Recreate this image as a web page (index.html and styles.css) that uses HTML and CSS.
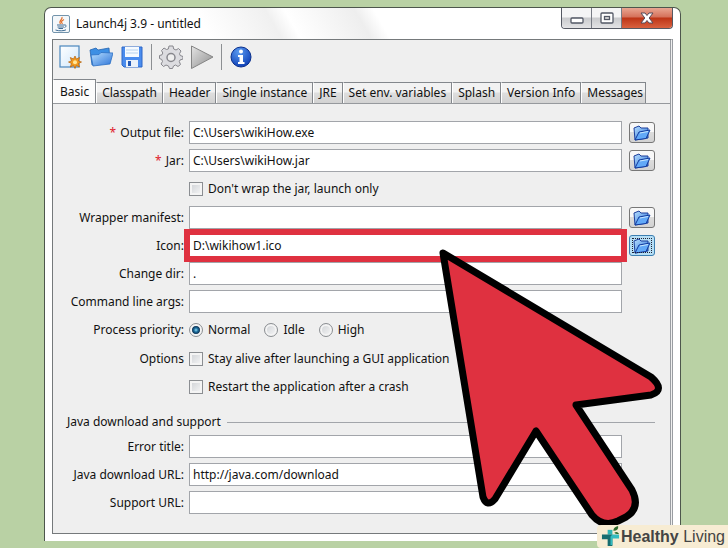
FILE: index.html
```html
<!DOCTYPE html>
<html lang="en">
<head>
    <meta charset="UTF-8">
    <meta name="viewport" content="width=device-width, initial-scale=1.0">
    <title>Launch4j 3.9 - untitled</title>
    <link rel="stylesheet" href="styles.css">
</head>
<body>
    <!-- Shared icons -->
    <svg class="defs" aria-hidden="true">
        <defs>
            <linearGradient id="blue" x1="0" y1="0" x2="1" y2="1">
                <stop offset="0" stop-color="#b9e0ff"/>
                <stop offset="1" stop-color="#2a72d8"/>
            </linearGradient>
            <linearGradient id="paper" x1="0" y1="0" x2="1" y2="1">
                <stop offset="0" stop-color="#ffffff"/>
                <stop offset="1" stop-color="#cfe6fb"/>
            </linearGradient>
            <linearGradient id="grey" x1="0" y1="0" x2="1" y2="1">
                <stop offset="0" stop-color="#e4e4e4"/>
                <stop offset="1" stop-color="#8f8f8f"/>
            </linearGradient>
            <radialGradient id="info" cx="0.4" cy="0.25" r="0.8">
                <stop offset="0" stop-color="#5b9bf0"/>
                <stop offset="1" stop-color="#0b3cb4"/>
            </radialGradient>
            <symbol id="open" viewBox="0 0 18 16">
                <path d="M1 3 L6 1 L8 3 L15 3 V13 L2 15 Z" fill="url(#blue)" stroke="#1c3f9c" stroke-linejoin="round"/>
                <path d="M6 7 L17 5 L13 13.500 L2 15 Z" fill="#62a9f8" stroke="#123a9e" stroke-linejoin="round"/>
                <path d="M7 8 L15 6.500" stroke="#c8e6ff"/>
            </symbol>
        </defs>
    </svg>

    <main class="window">
        <header class="title-bar">
            <svg class="app-icon" viewBox="0 0 18 18" aria-hidden="true">
                <rect x="0.500" y="0.500" width="17" height="17" rx="1.500" fill="#f3f7fa" stroke="#7394ac"/>
                <path d="M10 2 C11 5 6 5.500 8.500 9 M12 4.500 C9 6 9 7 10.500 9" fill="none" stroke="#e4702a" stroke-width="1.200"/>
                <path d="M5 10 H12 M5.500 12 H12 M6.500 13.500 H11 M12 10 C15 9.500 14.500 12 12.500 12.500 M3.500 15 C7 16.200 12 16 14 14.800" fill="none" stroke="#406d94"/>
            </svg>
            <h1>Launch4j 3.9 - untitled</h1>
            <div class="window-buttons">
                <button class="minimize" aria-label="Minimize">
                    <svg width="14" height="7" viewBox="0 0 14 7"><rect x="1" y="1" width="12" height="5" rx="1" fill="#fff" stroke="#535865" stroke-width="1.300"/></svg>
                </button>
                <button class="maximize" aria-label="Maximize">
                    <svg width="14" height="12" viewBox="0 0 14 12"><rect x="1" y="1" width="12" height="10" rx="1" fill="#fff" stroke="#535865" stroke-width="1.300"/><rect x="4.500" y="4.500" width="5" height="3" fill="#ddd" stroke="#535865" stroke-width="1.300"/></svg>
                </button>
                <button class="close" aria-label="Close">
                    <svg width="14" height="12" viewBox="0 0 14 12"><path d="M1 1 H5 L7 3.500 L9 1 H13 L9.200 6 L13 11 H9 L7 8.500 L5 11 H1 L4.800 6 Z" fill="#fff" stroke="#574a58" stroke-linejoin="round"/></svg>
                </button>
            </div>
        </header>

        <div class="content">
            <div class="toolbar">
                <button class="tool" aria-label="New">
                    <svg viewBox="0 0 24 24">
                        <rect x="2" y="1" width="19" height="21" fill="url(#paper)" stroke="#4a86bd" stroke-width="1.200"/>
                        <path d="M17 11 L18.300 14 L21.500 12.500 L20.500 16 L23.500 17 L20.500 18.500 L21.500 22 L18.300 20.500 L17 23.500 L15.500 20.500 L12.300 22 L13.500 18.500 L10.500 17 L13.500 16 L12.300 12.500 L15.500 14 Z" fill="#f29a20" stroke="#b4610c" stroke-width="0.700"/>
                        <circle cx="17" cy="17.200" r="2" fill="#ffe79a"/>
                    </svg>
                </button>
                <button class="tool" aria-label="Open">
                    <svg viewBox="0 0 24 24">
                        <path d="M1 5 L7 3 L9 5 L20 3 L21 17 L3 20 Z" fill="#3d8fe4" stroke="#2765ae" stroke-width="0.800"/>
                        <path d="M2 10 L10 9.500 L12 7.500 L24 8 L21 19 L4 21 Z" fill="url(#blue)" stroke="#2c70c4" stroke-width="0.800"/>
                    </svg>
                </button>
                <button class="tool" aria-label="Save">
                    <svg viewBox="0 0 24 24">
                        <path d="M2 2 H22 V22 H4 L2 20 Z" fill="#4a8cee" stroke="#2c66c6"/>
                        <rect x="5" y="2" width="14" height="10" fill="#f5faff"/>
                        <path d="M6 5 H18 M6 8 H18" stroke="#b7d2ee"/>
                        <rect x="6" y="15" width="12" height="7" fill="#eaf1fa"/>
                        <rect x="8" y="16" width="3" height="5" fill="#2459b5"/>
                    </svg>
                </button>
                <span class="separator"></span>
                <button class="tool" aria-label="Build">
                    <svg viewBox="0 0 24 24">
                        <path d="M10 1 H14 L14.700 4 L17 5 L19.500 3.500 L22 6 L20.500 8.700 L21.200 10.500 L24 11.500 V14 L21 15 L20.300 16.500 L21.500 19.500 L19 21.500 L16.500 20 L14.500 21 L13.500 23.500 H10.500 L9.500 21 L7 20 L4.500 21.500 L2 19 L3.500 16.500 L2.800 14.500 L0.500 13.500 V10.500 L3 9.800 L3.800 8 L2.500 5.500 L5 3 L7.500 4.500 L9.300 4 Z" fill="#dcdce0" stroke="#87878d" stroke-linejoin="round"/>
                        <circle cx="12" cy="12.500" r="4" fill="#efefef" stroke="#87878d" stroke-width="1.500"/>
                    </svg>
                </button>
                <button class="tool" aria-label="Run">
                    <svg viewBox="0 0 24 24"><path d="M1.500 1 L23 12 L1.500 23.500 Z" fill="url(#grey)" stroke="#858585"/></svg>
                </button>
                <span class="separator"></span>
                <button class="tool" aria-label="About">
                    <svg viewBox="0 0 24 24">
                        <circle cx="12" cy="12" r="10" fill="url(#info)" stroke="#0a2f8c"/>
                        <circle cx="12" cy="6.500" r="2" fill="#fff"/>
                        <path d="M9 10 H14 V17 H15.500 V19 H9 V17 H10.500 V12 H9 Z" fill="#fff"/>
                    </svg>
                </button>
            </div>

            <nav class="tabs" role="tablist">
                <button class="tab active" role="tab" aria-selected="true">Basic</button>
                <button class="tab" role="tab">Classpath</button>
                <button class="tab" role="tab">Header</button>
                <button class="tab" role="tab">Single instance</button>
                <button class="tab" role="tab">JRE</button>
                <button class="tab" role="tab">Set env. variables</button>
                <button class="tab" role="tab">Splash</button>
                <button class="tab" role="tab">Version Info</button>
                <button class="tab" role="tab">Messages</button>
            </nav>

            <form class="panel">
                <div class="row">
                    <label class="name" for="output"><span class="required">*</span> Output file:</label>
                    <input class="field" type="text" id="output" value="C:\Users\wikiHow.exe">
                    <button class="browse" type="button" aria-label="Browse output file"><svg><use href="#open"/></svg></button>
                </div>
                <div class="row">
                    <label class="name" for="jar"><span class="required">*</span> Jar:</label>
                    <input class="field" type="text" id="jar" value="C:\Users\wikiHow.jar">
                    <button class="browse" type="button" aria-label="Browse jar"><svg><use href="#open"/></svg></button>
                </div>
                <div class="row check-row">
                    <label class="choice"><input type="checkbox"> Don't wrap the jar, launch only</label>
                </div>
                <div class="row">
                    <label class="name" for="manifest">Wrapper manifest:</label>
                    <input class="field" type="text" id="manifest">
                    <button class="browse" type="button" aria-label="Browse manifest"><svg><use href="#open"/></svg></button>
                </div>
                <div class="row">
                    <label class="name" for="icon">Icon:</label>
                    <input class="field highlight" type="text" id="icon" value="D:\wikihow1.ico">
                    <button class="browse focused" type="button" aria-label="Browse icon"><svg><use href="#open"/></svg></button>
                </div>
                <div class="row">
                    <label class="name" for="dir">Change dir:</label>
                    <input class="field" type="text" id="dir" value=".">
                </div>
                <div class="row">
                    <label class="name" for="args">Command line args:</label>
                    <input class="field" type="text" id="args">
                </div>
                <div class="row check-row">
                    <span class="name">Process priority:</span>
                    <div class="choices">
                        <label class="choice"><input type="radio" name="priority" checked> Normal</label>
                        <label class="choice"><input type="radio" name="priority"> Idle</label>
                        <label class="choice"><input type="radio" name="priority"> High</label>
                    </div>
                </div>
                <div class="row">
                    <span class="name">Options</span>
                    <label class="choice"><input type="checkbox"> Stay alive after launching a GUI application</label>
                </div>
                <div class="row">
                    <label class="choice"><input type="checkbox"> Restart the application after a crash</label>
                </div>

                <h2 class="section">Java download and support</h2>

                <div class="row">
                    <label class="name" for="error">Error title:</label>
                    <input class="field" type="text" id="error">
                </div>
                <div class="row">
                    <label class="name" for="download">Java download URL:</label>
                    <input class="field" type="text" id="download" value="http://java.com/download">
                </div>
                <div class="row">
                    <label class="name" for="support">Support URL:</label>
                    <input class="field" type="text" id="support">
                </div>
            </form>
        </div>
    </main>

    <!-- Big pointer over the form -->
    <svg class="pointer" viewBox="0 0 228 276" aria-hidden="true">
        <path d="M5 7 L213 131 Q228 144 213 149 L138 159 L194 244 Q203 262 188 271 L180 275 Q165 282 154 269 L98 185 L57 253 Q49 262 45 251 Z" fill="#df3140" stroke="#000" stroke-width="7" stroke-linejoin="round"/>
    </svg>

    <div class="brand">
        <svg viewBox="0 0 20 22" aria-hidden="true">
            <path d="M7 4 H12 V9 H7 Z" fill="#2fb5b5"/>
            <path d="M1 9 H12 V14 H1 Z M7 14 H12 V21 H7 Z" fill="#176d70"/>
            <path d="M12 9 H19 V13 H12 V20 H10 V11 Z" fill="#35bcc0"/>
            <path d="M13 5 Q13 1 18 0 Q19 5 13 5 Z M14 7 Q17 5 19 8 Q16 9 14 7 Z" fill="#2d6a2b"/>
        </svg>
        <span><strong>Healthy</strong> Living</span>
    </div>
</body>
</html>
```

FILE: styles.css
```css
* {
    box-sizing: border-box;
}
body {
    margin: 0;
    min-height: 100vh;
    padding: 7px 47px 7px 44px;
    background-color: #b9d1a4;
    font-family: "Noto Sans", "Open Sans", sans-serif;
    font-size: 12px;
    line-height: 16px;
    color: #111;
    overflow: hidden;
}
button, input {
    font: inherit;
    color: inherit;
}
.defs {
    position: absolute;
    width: 0;
    height: 0;
}
.window {
    padding: 0 7px 7px;
    border: 1px solid #4d564c;
    border-bottom: none;
    border-radius: 7px 7px 0 0;
    background-color: #fff;
}

/* Title bar */
.title-bar {
    display: flex;
    align-items: center;
    gap: 6px;
    height: 31px;
    background: linear-gradient(60deg, #fff 25%, #f0f0f0 36%, #fff 39%, #eee 50%, #fff 53%);
}
.app-icon {
    width: 18px;
    height: 18px;
}
h1 {
    flex: 1;
    margin: 0;
    font-size: 12px;
    font-weight: normal;
}
.window-buttons {
    display: flex;
    align-self: flex-start;
    height: 21px;
    border: 1px solid #555963;
    border-top: none;
    border-radius: 0 0 4px 4px;
    overflow: hidden;
}
.window-buttons button {
    display: flex;
    align-items: center;
    justify-content: center;
    width: 30px;
    padding: 0;
    border: none;
    border-right: 1px solid #777b84;
    background: linear-gradient(#f4f4f5 45%, #c9cacd 50%, #e3e3e5);
}
.window-buttons .minimize {
    padding-top: 5px;
}
.window-buttons .close {
    width: 50px;
    border: none;
    background: linear-gradient(#e9a692, #d5715a 45%, #bd3416 50%, #d9613f);
}

/* Toolbar */
.content {
    padding-bottom: 19px;
    border: 1px solid #75797b;
    border-right: 3px double #9a9da2;
    background-color: #efefef;
}
.toolbar {
    display: flex;
    align-items: center;
    gap: 7px;
    height: 39px;
    padding: 0 5px 6px;
}
.tool {
    width: 24px;
    height: 24px;
    padding: 0;
    border: none;
    background: none;
}
.tool svg {
    display: block;
    width: 24px;
    height: 24px;
}
.separator {
    width: 1px;
    height: 26px;
    background-color: #8c8f92;
}

/* Tabs */
.tabs {
    display: flex;
    align-items: flex-end;
    height: 24px;
}
.tab {
    height: 21px;
    padding: 0 5px;
    border: 1px solid #83878c;
    border-left-color: #fff;
    border-bottom: none;
    background: linear-gradient(#f2f2f2 45%, #dedede 50%, #d2d2d2);
    white-space: nowrap;
}
.tab:last-child {
    padding-right: 2px;
}
.tab.active {
    height: 24px;
    padding: 0 6px;
    background: #fbfbfb;
}

/* Form */
.panel {
    display: flex;
    flex-direction: column;
    gap: 5px;
    padding: 17px 15px 0 0;
    border-top: 1px solid #96999d;
}
.row {
    display: grid;
    grid-template-columns: 131px 1fr 28px;
    column-gap: 5px;
    align-items: center;
    height: 23px;
}
.check-row {
    height: 24px;
}
.name {
    grid-column: 1;
    text-align: right;
    white-space: nowrap;
}
.required {
    margin-right: 1px;
    color: #e0202c;
}
.field {
    width: 100%;
    height: 23px;
    padding: 0 3px;
    border: 1px solid #a2a5aa;
    border-radius: 0;
    background-color: #fff;
}
.highlight {
    border-color: #df3140;
    outline: 6px solid #df3140;
    outline-offset: -1px;
}
.browse {
    justify-self: end;
    width: 26px;
    height: 21px;
    padding: 0;
    border: 1px solid #777;
    border-radius: 3px;
    background: linear-gradient(#f8f8f8 45%, #dcdcdc 50%, #d2d2d2);
}
.browse svg {
    display: block;
    width: 18px;
    height: 16px;
    margin: 0 auto;
}
.browse.focused {
    border-color: #3c7fb1;
    background: #b5def5;
    outline: 1px dotted #223;
    outline-offset: -4px;
}
.choices {
    display: flex;
    gap: 14px;
}
.choice {
    display: flex;
    grid-column: 2;
    align-items: center;
    gap: 5px;
    white-space: nowrap;
}
.choice input {
    appearance: none;
    width: 14px;
    height: 14px;
    margin: 0;
    border: 1px solid #8b8e92;
    background: linear-gradient(135deg, #cdd0d4, #f8f8f8);
    box-shadow: inset 0 0 0 2px #f4f4f4;
}
.choice input[type="radio"] {
    border-radius: 50%;
}
.choice input[type="radio"]:checked {
    background: radial-gradient(circle at 50% 50%, #8fdcf5 0, #1c6c9c 2px, #0c2f50 4px, #eee 5px);
}
.section {
    display: flex;
    align-items: center;
    gap: 6px;
    margin: 11px 0 0 14px;
    font-size: 12px;
    font-weight: normal;
}
.section::after {
    content: "";
    flex: 1;
    height: 1px;
    background-color: #a2a5aa;
}

/* Overlays */
.pointer {
    position: absolute;
    left: 438px;
    top: 246px;
    width: 228px;
    height: 276px;
    overflow: visible;
}
.brand {
    position: absolute;
    right: 0;
    bottom: 0;
    display: flex;
    align-items: center;
    gap: 1px;
    height: 23px;
    padding: 0 3px 0 4px;
    border-radius: 4px 0 0 4px;
    background-color: #f7ecd3;
    color: #444;
    font-family: "Liberation Sans", sans-serif;
    font-size: 16px;
    white-space: nowrap;
}
.brand svg {
    width: 19px;
    height: 21px;
}
```
